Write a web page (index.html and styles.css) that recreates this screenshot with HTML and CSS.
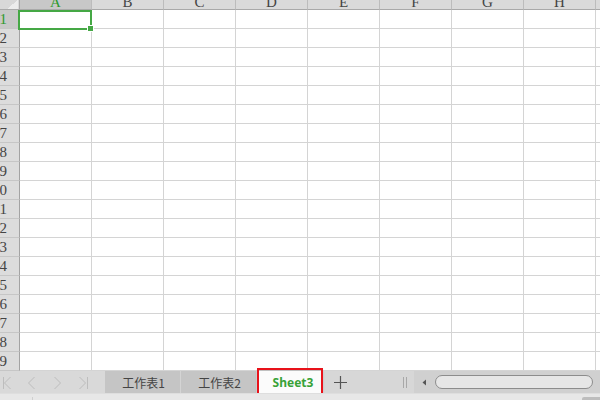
FILE: index.html
```html
<!DOCTYPE html>
<html lang="zh-CN">
<head>
<meta charset="utf-8">
<title>Sheet3</title>
<link rel="stylesheet" href="styles.css">
</head>
<body>
<div class="app">
  <div class="sheet">
    <div class="grid">
      <div class="corner"></div>
      <div class="ch sel">A</div><div class="ch">B</div><div class="ch">C</div><div class="ch">D</div><div class="ch">E</div><div class="ch">F</div><div class="ch">G</div><div class="ch">H</div><div class="ch">I</div>
      <div class="rh sel"><span>1</span></div><div class="c"></div><div class="c"></div><div class="c"></div><div class="c"></div><div class="c"></div><div class="c"></div><div class="c"></div><div class="c"></div><div class="c"></div>
      <div class="rh"><span>2</span></div><div class="c"></div><div class="c"></div><div class="c"></div><div class="c"></div><div class="c"></div><div class="c"></div><div class="c"></div><div class="c"></div><div class="c"></div>
      <div class="rh"><span>3</span></div><div class="c"></div><div class="c"></div><div class="c"></div><div class="c"></div><div class="c"></div><div class="c"></div><div class="c"></div><div class="c"></div><div class="c"></div>
      <div class="rh"><span>4</span></div><div class="c"></div><div class="c"></div><div class="c"></div><div class="c"></div><div class="c"></div><div class="c"></div><div class="c"></div><div class="c"></div><div class="c"></div>
      <div class="rh"><span>5</span></div><div class="c"></div><div class="c"></div><div class="c"></div><div class="c"></div><div class="c"></div><div class="c"></div><div class="c"></div><div class="c"></div><div class="c"></div>
      <div class="rh"><span>6</span></div><div class="c"></div><div class="c"></div><div class="c"></div><div class="c"></div><div class="c"></div><div class="c"></div><div class="c"></div><div class="c"></div><div class="c"></div>
      <div class="rh"><span>7</span></div><div class="c"></div><div class="c"></div><div class="c"></div><div class="c"></div><div class="c"></div><div class="c"></div><div class="c"></div><div class="c"></div><div class="c"></div>
      <div class="rh"><span>8</span></div><div class="c"></div><div class="c"></div><div class="c"></div><div class="c"></div><div class="c"></div><div class="c"></div><div class="c"></div><div class="c"></div><div class="c"></div>
      <div class="rh"><span>9</span></div><div class="c"></div><div class="c"></div><div class="c"></div><div class="c"></div><div class="c"></div><div class="c"></div><div class="c"></div><div class="c"></div><div class="c"></div>
      <div class="rh"><span>10</span></div><div class="c"></div><div class="c"></div><div class="c"></div><div class="c"></div><div class="c"></div><div class="c"></div><div class="c"></div><div class="c"></div><div class="c"></div>
      <div class="rh"><span>11</span></div><div class="c"></div><div class="c"></div><div class="c"></div><div class="c"></div><div class="c"></div><div class="c"></div><div class="c"></div><div class="c"></div><div class="c"></div>
      <div class="rh"><span>12</span></div><div class="c"></div><div class="c"></div><div class="c"></div><div class="c"></div><div class="c"></div><div class="c"></div><div class="c"></div><div class="c"></div><div class="c"></div>
      <div class="rh"><span>13</span></div><div class="c"></div><div class="c"></div><div class="c"></div><div class="c"></div><div class="c"></div><div class="c"></div><div class="c"></div><div class="c"></div><div class="c"></div>
      <div class="rh"><span>14</span></div><div class="c"></div><div class="c"></div><div class="c"></div><div class="c"></div><div class="c"></div><div class="c"></div><div class="c"></div><div class="c"></div><div class="c"></div>
      <div class="rh"><span>15</span></div><div class="c"></div><div class="c"></div><div class="c"></div><div class="c"></div><div class="c"></div><div class="c"></div><div class="c"></div><div class="c"></div><div class="c"></div>
      <div class="rh"><span>16</span></div><div class="c"></div><div class="c"></div><div class="c"></div><div class="c"></div><div class="c"></div><div class="c"></div><div class="c"></div><div class="c"></div><div class="c"></div>
      <div class="rh"><span>17</span></div><div class="c"></div><div class="c"></div><div class="c"></div><div class="c"></div><div class="c"></div><div class="c"></div><div class="c"></div><div class="c"></div><div class="c"></div>
      <div class="rh"><span>18</span></div><div class="c"></div><div class="c"></div><div class="c"></div><div class="c"></div><div class="c"></div><div class="c"></div><div class="c"></div><div class="c"></div><div class="c"></div>
      <div class="rh"><span>19</span></div><div class="c"></div><div class="c"></div><div class="c"></div><div class="c"></div><div class="c"></div><div class="c"></div><div class="c"></div><div class="c"></div><div class="c"></div>
    </div>
    <div class="selection"><div class="handle"></div></div>
  </div>

  <div class="tabbar">
    <div class="nav">
      <svg width="105" height="22" viewBox="0 0 105 22">
        <g fill="none" stroke="#bdbdbd" stroke-width="1">
          <path d="M3.5 6v12"/>
          <path d="M10.5 6l-6 6 6 6"/>
          <path d="M34.5 6l-6 6 6 6"/>
          <path d="M54.5 6l6 6-6 6"/>
          <path d="M79.5 6l6 6-6 6"/>
          <path d="M87.5 6v12"/>
        </g>
      </svg>
    </div>
    <div class="tab">工作表1</div>
    <div class="tab tab2">工作表2</div>
    <div class="tab active">Sheet3</div>
    <div class="add">
      <svg width="15" height="15" viewBox="0 0 15 15">
        <path d="M7.5 1v13M1 7.5h13" stroke="#555" stroke-width="1.2" fill="none"/>
      </svg>
    </div>
    <div class="split"><i></i><i></i></div>
    <div class="hscroll">
      <svg class="larr" width="5" height="7" viewBox="0 0 5 7"><path d="M4 0.5v6L0.5 3.5z" fill="#555"/></svg>
      <div class="thumb"></div>
    </div>
  </div>
  <div class="status"><i class="tick"></i><i class="corner-r"></i></div>
</div>
</body>
</html>
```

FILE: styles.css
```css
* { box-sizing: border-box; }
html, body { margin: 0; padding: 0; }
body {
  width: 600px;
  height: 400px;
  overflow: hidden;
  background: #ffffff;
  font-family: "Liberation Serif", "Noto Sans CJK SC", serif;
}
.app {
  width: 600px;
  height: 400px;
  display: flex;
  flex-direction: column;
}
.sheet {
  position: relative;
  height: 371px;
  overflow: hidden;
  flex: none;
}
.grid {
  display: grid;
  grid-template-columns: 20px repeat(9, 72px);
  grid-template-rows: 10px repeat(19, 19px);
  width: 668px;
}
.corner {
  position: relative;
  background: #d8d8d8;
  border-right: 1px solid #a9a9a9;
  border-bottom: 1px solid #a9a9a9;
}
.corner::after {
  content: "";
  position: absolute;
  right: 1px;
  bottom: 0;
  width: 11px;
  height: 9px;
  background: linear-gradient(to bottom right, transparent 50%, #ececec 50%);
}
.ch {
  background: #dadada;
  border-right: 1px solid #bcbcbc;
  border-bottom: 1px solid #a9a9a9;
  color: #444;
  font-size: 15px;
  line-height: 14px;
  display: flex;
  align-items: flex-end;
  justify-content: center;
  overflow: hidden;
}
.rh {
  background: #dcdcdc;
  border-right: 1px solid #a3a3a3;
  border-bottom: 1px solid #c6c6c6;
  color: #444;
  font-size: 15px;
  line-height: 19px;
  display: flex;
  justify-content: flex-end;
  padding-right: 12px;
  overflow: hidden;
}
.rh span { flex: none; }
.ch.sel, .rh.sel {
  background: #c8c8c8;
  color: #2f9a2f;
}
.c {
  border-right: 1px solid #d4d4d4;
  border-bottom: 1px solid #d4d4d4;
  background: #ffffff;
}
.selection {
  position: absolute;
  left: 18px;
  top: 10px;
  width: 74px;
  height: 20px;
  border: 2px solid #45a845;
}
.handle {
  position: absolute;
  right: -4px;
  bottom: -4px;
  width: 7px;
  height: 7px;
  background: #45a845;
  border: 1px solid #ffffff;
}

.tabbar {
  position: relative;
  height: 22px;
  flex: none;
  display: flex;
  align-items: stretch;
  background: #d7d7d7;
  font-family: "Noto Sans CJK SC", "Noto Sans", sans-serif;
}
.nav {
  width: 105px;
  flex: none;
  background: #d9d9d9;
}
.nav svg { display: block; }
.tab {
  width: 76px;
  flex: none;
  background: #c5c5c5;
  border-right: 1px solid #d4d4d4;
  color: #444;
  font-size: 12px;
  display: flex;
  align-items: center;
  justify-content: center;
  padding-left: 2px;
}
.tab.active {
  position: relative;
  width: 64px;
  margin-left: 1px;
  background: #fbfbfb;
  border-right: none;
  color: #38a238;
  font-family: "Noto Sans", "Noto Sans CJK SC", sans-serif;
  font-weight: 700;
  font-size: 12px;
  box-shadow: 0 0 3px rgba(0,0,0,0.25);
  padding-left: 6px;
}
.tab.active::after {
  content: "";
  position: absolute;
  left: -1px;
  right: -1px;
  top: -3px;
  bottom: -2px;
  border: 2px solid #e8121a;
}
.add {
  width: 36px;
  flex: none;
  display: flex;
  align-items: center;
  justify-content: center;
}
.add svg { display: block; }
.split {
  margin-left: 45px;
  width: 11px;
  flex: none;
  display: flex;
  align-items: center;
  gap: 2px;
}
.split i {
  display: block;
  width: 1px;
  height: 11px;
  background: #a8a8a8;
}
.hscroll {
  flex: 1;
  background: #d0d0d0;
  display: flex;
  align-items: center;
  padding-left: 8px;
}
.larr { display: block; flex: none; }
.thumb {
  margin-left: 8px;
  width: 158px;
  height: 14px;
  border: 1px solid #8c8c8c;
  border-radius: 7px;
  background: #e6e6e6;
  flex: none;
}
.status {
  position: relative;
  flex: 1;
  background: #e7e7e7;
  border-top: 1px solid #dedede;
}
.tick {
  position: absolute;
  left: 32px;
  top: 3px;
  width: 1px;
  height: 4px;
  background: #cfcfcf;
}
.corner-r {
  position: absolute;
  right: 0;
  top: 3px;
  width: 18px;
  height: 4px;
  background: #bdbdbd;
  border-top-left-radius: 2px;
}
```
